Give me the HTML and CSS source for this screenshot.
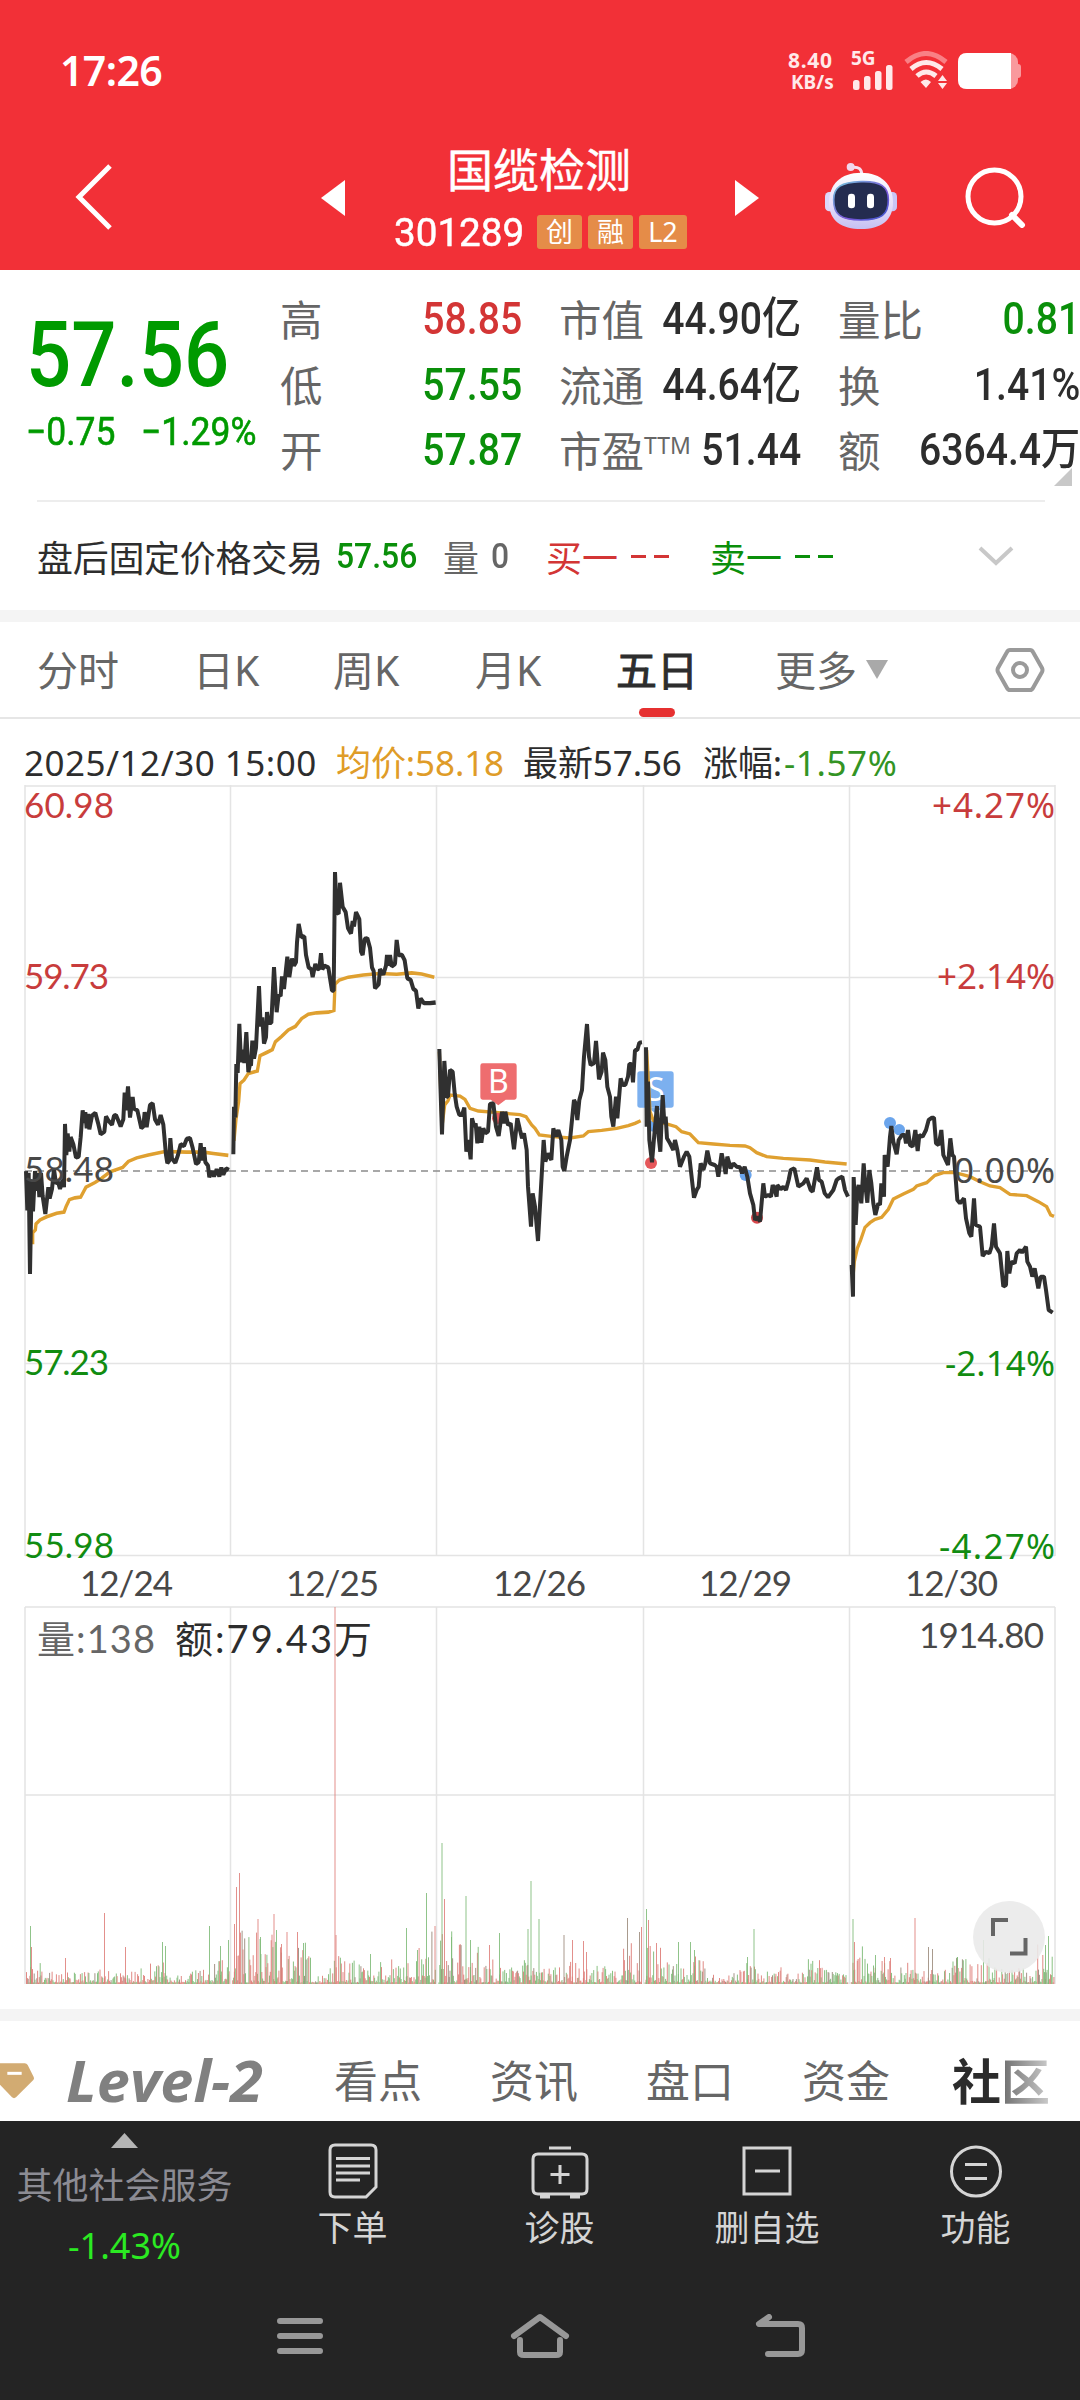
FILE: index.html
```
<!DOCTYPE html>
<html lang="zh-CN">
<head>
<meta charset="utf-8">
<title>国缆检测 301289</title>
<link rel="stylesheet" href="styles.css">
</head>
<body>
<main class="app">
  <header class="top">
    <div class="status">
      <span class="clock">17:26</span>
      <div class="speed"><b>8.40</b><b class="unit">KB/s</b></div>
      <div class="signal"><b>5G</b>
        <svg width="40" height="26" viewBox="0 0 40 26" fill="#ffe9ea"><rect x="0" y="15" width="6.5" height="10" rx="2.5"/><rect x="11" y="11" width="6.5" height="14" rx="2.5"/><rect x="22" y="6" width="6.5" height="19" rx="2.5"/><rect x="33" y="0" width="6.5" height="25" rx="2.5"/></svg>
      </div>
      <svg class="wifi" width="46" height="40" viewBox="0 0 46 40" fill="none" stroke="#ffe9ea" stroke-width="5"><path d="M2 11Q22-6 42 11" stroke="#f98085"/><path d="M7 18Q22 5 38 18"/><path d="M13 25Q22 17 32 25"/><path d="M16.500 31Q22 26 27 31L22 37ZM34 30L38.500 24L43 30ZM34 32L38.500 38L43 32Z" fill="#ffe9ea" stroke="none"/></svg>
      <svg width="64" height="38" viewBox="0 0 64 38"><rect y="1" width="60" height="36" rx="9" fill="#f9999d"/><rect x="56" y="12" width="7" height="14" rx="3" fill="#f9999d"/><path d="M9 1H53V37H9Q0 37 0 28V10Q0 1 9 1Z" fill="#fff"/></svg>
    </div>
    <div class="nav">
      <svg class="back" width="40" height="70" viewBox="0 0 40 70" fill="none" stroke="#fff" stroke-width="5"><path d="M36 4L5 35L36 66"/></svg>
      <svg class="prev" width="24" height="36" viewBox="0 0 24 36"><path d="M24 0V36L0 18Z" fill="#fff"/></svg>
      <div class="title">
        <h1>国缆检测</h1>
        <div class="code"><span class="num">301289</span><i>创</i><i>融</i><i class="l2">L2</i></div>
      </div>
      <svg class="next" width="24" height="36" viewBox="0 0 24 36"><path d="M0 0V36L24 18Z" fill="#fff"/></svg>
      <svg class="robot" width="72" height="68" viewBox="0 0 216 204">
        <defs>
          <linearGradient id="shell" x1="0" y1="0" x2="0" y2="1"><stop offset="0" stop-color="#fff"/><stop offset=".6" stop-color="#e4dcfa"/><stop offset="1" stop-color="#c5c0f2"/></linearGradient>
          <linearGradient id="rim" x1="0" y1="0" x2="1" y2="1"><stop offset="0" stop-color="#74c8dc"/><stop offset=".6" stop-color="#7a56d8"/><stop offset="1" stop-color="#3a5bd0"/></linearGradient>
        </defs>
        <path d="M80 16Q112 12 110 40" fill="none" stroke="#f6dff0" stroke-width="9"/><circle cx="77" cy="15" r="12" fill="#f1d6ec"/>
        <rect y="90" width="30" height="58" rx="13" fill="#dcd6fa"/><rect x="186" y="90" width="30" height="58" rx="13" fill="#c9c5f6"/>
        <path d="M108 32C170 32 204 68 204 122C204 176 166 201 108 201C50 201 12 176 12 122C12 68 46 32 108 32Z" fill="url(#shell)"/>
        <path d="M108 59C168 57 190 75 190 113C190 158 170 174 108 174C46 174 26 158 26 113C26 75 48 61 108 59Z" fill="#242c50" stroke="url(#rim)" stroke-width="5"/>
        <rect x="69" y="95" width="21" height="44" rx="10" fill="#fff"/><rect x="126" y="95" width="21" height="44" rx="10" fill="#fff"/>
      </svg>
      <svg class="search" width="62" height="62" viewBox="0 0 62 62" fill="none" stroke="#fff" stroke-width="5"><circle cx="30.500" cy="30.500" r="26.500"/><path d="M48 49L58 59" stroke-width="6" stroke-linecap="round"/></svg>
    </div>
  </header>

  <section class="quote">
    <div class="price down">
      <span class="last num">57.56</span>
      <div class="chg"><span class="num">−0.75</span><span class="num">−1.29%</span></div>
    </div>
    <dl class="c1"><dt>高</dt><dd class="up">58.85</dd><dt>低</dt><dd class="down">57.55</dd><dt>开</dt><dd class="down">57.87</dd></dl>
    <dl class="c2"><dt>市值</dt><dd>44.90亿</dd><dt>流通</dt><dd>44.64亿</dd><dt>市盈<sup>TTM</sup></dt><dd>51.44</dd></dl>
    <dl class="c3"><dt>量比</dt><dd class="down">0.81</dd><dt>换</dt><dd>1.41%</dd><dt>额</dt><dd>6364.4万</dd></dl>
    <i class="corner"></i>
  </section>

  <section class="after">
    <span>盘后固定价格交易</span><span class="num down">57.56</span><span class="muted">量</span><span class="num muted">0</span>
    <span class="up">买一</span><span class="up dash"><i></i><i></i></span><span class="down">卖一</span><span class="down dash"><i></i><i></i></span>
    <svg width="36" height="22" viewBox="0 0 36 22" fill="none" stroke="#c8c8c8" stroke-width="4"><path d="M2 3L18 18L34 3"/></svg>
  </section>

  <nav class="periods">
    <a>分时</a><a>日K</a><a>周K</a><a>月K</a><a class="on">五日</a><a>更多</a>
    <svg class="more" width="22" height="19" viewBox="0 0 22 19"><path d="M0 0H22L11 19Z" fill="#a9a9a9"/></svg>
    <svg width="50" height="46" viewBox="0 0 50 46" fill="none" stroke="#9a9a9a" stroke-width="4"><path d="M15 3H35Q37 3 38 5L47 21Q48 23 47 25L38 41Q37 43 35 43H15Q13 43 12 41L3 25Q2 23 3 21L12 5Q13 3 15 3Z"/><circle cx="25" cy="23" r="7"/></svg>
  </nav>

  <div class="info"><span class="date">2025/12/30 15:00</span><span class="avg">均价:58.18</span><span>最新57.56</span><span>涨幅:</span><span class="pct">-1.57%</span></div>

  <svg class="chart" width="1080" height="1204" viewBox="0 780 1080 1204">
    <g class="grid">
      <path d="M25 786H1055M25 977.500H1055M25 1363.500H1055M25 1555.500H1055M25 1607H1055M25 1795H1055"/>
      <path d="M25 785V1556M230.500 785V1556M436.500 785V1556M643.500 785V1556M849.500 785V1556M1055 785V1556M25 1607V1984M230.500 1607V1984M436.500 1607V1984M643.500 1607V1984M849.500 1607V1984M1055 1607V1984"/>
      <path class="zero" d="M25 1171H1055"/>
    </g>
    <g class="average">
      <g transform="translate(0 780) scale(.33333 .35714)">
        <path d="M98 1300L98 1268 106 1260 108 1243 120 1232 140 1223 170 1213 192 1210 198 1195 208 1175 225 1170 242 1168 258 1140 285 1127 305 1115 330 1097 368 1085 385 1068 410 1058 445 1050 495 1040 560 1042 610 1042 640 1046 685 1051"/>
        <path d="M702 1010L708 950 716 900 720 850 732 840 745 822 772 815 780 772 800 763 817 755 826 733 845 718 865 700 886 690 905 668 925 656 950 652 985 650 1002 645 1005 572 1018 560 1045 552 1090 546 1140 542 1190 544 1235 540 1265 543 1303 552"/>
      </g>
      <g transform="translate(420 960) scale(.33333)">
        <path d="M58 275L66 500 74 435 84 422 90 405 120 408 135 418 150 445 175 453 235 458 300 464 318 470 335 495 345 505 358 525 400 530 450 534 490 528 505 515 545 511 590 505 625 497 645 490 662 482"/>
      </g>
    </g>
    <g transform="translate(420 960) scale(.33333)">
      <circle cx="233" cy="475" r="17" fill="#e5575a"/>
      <path d="M188 310H283Q290 310 290 317V412Q290 419 283 419H257L235 436L212 419H188Q181 419 181 412V317Q181 310 188 310Z" fill="#ee6d6f"/>
      <rect x="652" y="334" width="109" height="109" rx="8" fill="#7cb0ef"/>
      <path d="M684 443H728L706 460Z" fill="#7cb0ef"/><circle cx="700" cy="498" r="17" fill="#6ba5ec"/>
      <circle cx="693" cy="609" r="18" fill="#e5575a"/><circle cx="977" cy="645" r="18" fill="#6ba5ec"/><circle cx="1011" cy="773" r="18" fill="#d9484c"/>
      <text class="mark" x="235" y="399">B</text><text class="mark" x="707" y="422">S</text>
    </g>
    <g transform="translate(820 1040) scale(.33333)" fill="#6ba5ec"><circle cx="210" cy="249" r="18"/><circle cx="238" cy="269" r="17"/></g>
    <g class="average">
      <g transform="translate(420 960) scale(.33333)"><path d="M680 270L690 455 700 482 745 493 768 500 785 515 810 522 835 548 880 552 930 556 975 558 990 563 1010 578 1040 590 1090 595 1170 600 1215 606 1280 612"/></g>
      <g transform="translate(820 1040) scale(.33333)"><path d="M98 720L103 665 112 625 122 600 135 562 150 548 165 538 185 532 205 508 220 477 250 462 280 448 290 438 320 428 345 406 370 398 400 397 425 403 450 410 480 425 510 438 540 443 570 463 620 467 655 485 680 500 692 525 702 529"/></g>
    </g>
    <g class="trend">
      <g transform="translate(0 780) scale(.33333 .35714)">
        <path d="M78 1095L82 1205 86 1100 90 1383 95 1120 99 1208 105 1095 110 1150 114 1100 118 1168 123 1100 128 1165 136 1215 145 1140 149 1172 156 1145 162 1090 168 1130 174 1125 180 1145 188 1120 192 1140 195 963 199 1050 203 990 208 1040 212 1000 220 1020 228 1057 236 1055 242 1000 248 925 253 960 256 930 260 975 265 935 268 978 276 940 286 932 294 960 302 992 313 985 318 942 326 955 336 965 342 940 348 938 362 970 370 950 374 875 378 925 384 858 390 945 398 888 402 920 412 925 424 975 430 970 434 930 440 972 450 910 458 905 465 950 474 965 482 938 490 965 498 1050 502 1073 508 1065 511 1003 516 1060 526 1072 534 1050 542 1020 552 1025 560 1005 570 1003 578 1030 588 1075 596 1070 602 1017 606 1065 612 1028 616 1070 624 1080 628 1112 636 1095 642 1110 650 1090 658 1110 664 1085 670 1105 678 1088 687 1092"/>
        <path d="M700 1048L702 915 706 945 709 795 713 820 718 683 723 790 727 755 733 792 739 706 745 818 750 795 753 800 757 730 762 780 768 750 777 577 782 690 787 665 792 738 798 720 801 650 806 680 814 680 822 524 830 650 836 600 842 605 846 550 852 585 858 530 862 495 868 552 876 500 882 520 888 510 891 455 896 403 904 440 913 438 918 490 926 525 934 530 938 552 946 515 952 530 958 528 963 485 967 530 973 520 985 525 990 555 996 590 1001 590 1005 258 1010 370 1016 375 1020 288 1028 355 1037 370 1044 415 1053 430 1058 395 1062 410 1068 370 1078 390 1083 480 1088 490 1094 445 1102 443 1110 470 1116 525 1121 535 1125 583 1136 572 1140 530 1150 545 1158 520 1161 490 1166 520 1170 490 1175 522 1185 515 1190 448 1196 490 1206 490 1214 505 1222 555 1232 560 1240 585 1248 590 1255 640 1262 612 1272 625 1290 625 1307 623"/>
      </g>
      <g transform="translate(420 960) scale(.33333)">
        <path d="M58 267L62 400 66 523 70 400 73 303 80 410 84 410 90 330 98 335 104 400 110 440 118 465 126 465 133 443 139 575 145 540 152 598 156 475 163 500 167 490 172 550 178 500 184 548 190 505 196 520 204 515 210 432 220 430 228 500 236 528 246 455 252 490 256 455 264 495 272 490 282 568 292 475 300 510 306 535 312 520 320 570 324 680 333 800 338 700 345 740 354 843 362 700 371 540 376 605 384 580 394 600 400 505 408 530 415 510 424 540 428 620 433 633 440 590 450 540 456 480 462 420 467 430 472 480 478 420 486 390 492 290 501 192 507 290 512 315 522 310 528 243 537 358 545 335 549 278 556 300 562 380 570 410 574 470 580 500 588 410 592 475 602 355 608 375 616 375 624 350 628 312 634 312 639 367 645 270 652 270 658 248 666 247"/>
        <path d="M678 262L680 500 684 365 688 540 696 607 705 500 711 438 716 530 721 575 728 405 733 490 737 470 741 535 750 550 760 570 765 540 772 570 780 620 792 590 800 575 808 590 822 713 830 690 836 680 842 610 850 630 856 610 862 572 870 610 884 615 890 620 895 650 905 580 912 615 917 642 922 590 932 625 940 610 950 620 960 622 966 640 974 620 982 650 990 700 1000 735 1005 780 1012 770 1020 785 1030 670 1035 710 1045 705 1053 710 1058 675 1064 690 1070 710 1072 675 1082 688 1090 680 1098 690 1106 660 1112 630 1123 625 1135 680 1150 670 1160 655 1172 690 1178 695 1191 622 1197 660 1205 665 1214 700 1224 712 1240 690 1250 660 1256 655 1267 650 1275 690 1284 710"/>
      </g>
      <g transform="translate(820 1040) scale(.33333)">
        <path d="M95 675L99 770 101 411 107 555 112 450 116 435 124 490 131 370 136 435 142 488 148 390 154 430 160 490 166 525 175 490 180 495 184 430 192 470 194 345 203 380 210 290 214 258 220 305 230 343 236 300 246 285 254 285 258 310 264 270 270 315 278 320 286 270 293 333 298 285 308 290 318 270 326 240 336 233 342 233 348 310 356 315 364 270 370 345 384 375 391 295 397 345 402 350 412 480 420 490 432 475 438 535 448 580 454 590 462 475 467 555 480 560 488 648 498 635 508 640 515 620 522 550 528 620 540 640 550 740 558 735 562 633 568 700 574 665 584 670 590 640 600 630 606 638 618 620 622 665 630 680 637 710 644 685 655 745 662 710 672 710 678 750 686 810 698 818"/>
      </g>
    </g>
    <g class="axis">
      <text class="r" x="24" y="818" textLength="90">60.98</text><text class="r" x="24" y="989" textLength="85">59.73</text><text x="24" y="1182" textLength="90">58.48</text><text class="g" x="24" y="1375" textLength="85">57.23</text><text class="g" x="24" y="1558" textLength="90">55.98</text>
      <text class="r pc" x="932" y="818" textLength="123">+4.27%</text><text class="r pc" x="937" y="989" textLength="118">+2.14%</text><text class="pc" x="954" y="1183" textLength="101">0.00%</text><text class="g pc" x="945" y="1376" textLength="110">-2.14%</text><text class="g pc" x="939" y="1559" textLength="116">-4.27%</text>
      <text x="80" y="1596" textLength="93">12/24</text><text x="286" y="1596" textLength="93">12/25</text><text x="493" y="1596" textLength="93">12/26</text><text x="699" y="1596" textLength="93">12/29</text><text x="905" y="1596" textLength="93">12/30</text>
      <text x="919" y="1648" textLength="125">1914.80</text>
    </g>
    <g class="vol-label"><text x="37" y="1653" textLength="118" fill="#666">量:138</text><text x="175" y="1653" textLength="197" fill="#2d2d2d">额:79.43万</text></g>
    <g id="volume"></g>
    <circle cx="1009" cy="1937" r="36" fill="#e9e9e9" fill-opacity=".88"/>
    <path d="M993 1936V1920H1008M1010 1953.500H1025.500V1938" fill="none" stroke="#666" stroke-width="4"/>
  </svg>

  <nav class="sections">
    <svg class="gem" width="34" height="38" viewBox="0 0 102 114"><path d="M0 4H74Q80 4 83 9L101 45Q103 50 100 54L48 106Q42 111 36 106L0 68Z" fill="#d2ab72"/><path d="M22 34H65" stroke="#fff" stroke-width="9"/></svg>
    <svg class="level" width="204" height="50"><text x="1" y="46" textLength="197" lengthAdjust="spacingAndGlyphs">Level-2</text></svg>
    <a>看点</a><a>资讯</a><a>盘口</a><a>资金</a><a class="on">社区</a>
  </nav>

  <footer class="dock">
    <div class="tools">
      <div class="index"><svg width="27" height="15" viewBox="0 0 27 15"><path d="M13.500 0L27 15H0Z" fill="#b5b5b5"/></svg><span>其他社会服务</span><span class="pct">-1.43%</span></div>
      <a><svg width="60" height="60" viewBox="0 0 60 60"><path d="M12 4H48Q53 4 53 9V46L43 56H12Q7 56 7 51V9Q7 4 12 4Z"/><path d="M13 17.500H47M13 25H47M13 32H47M13 39H37"/></svg>下单</a>
      <a><svg width="60" height="60" viewBox="0 0 60 60"><path d="M8 13H52Q57 13 57 18V48Q57 53 52 53H8Q3 53 3 48V18Q3 13 8 13ZM19 7H41M10 56H20M40 56H50M30 24V43M20.500 33.500H39.500"/></svg>诊股</a>
      <a><svg width="60" height="60" viewBox="0 0 60 60"><path d="M7 7H53V53H7ZM18 30H43"/></svg>删自选</a>
      <a><svg width="60" height="60" viewBox="0 0 60 60"><circle cx="30" cy="30.500" r="24.500"/><path d="M19 23.500H41M19 37.500H41"/></svg>功能</a>
    </div>
    <div class="keys">
      <svg width="46" height="38" viewBox="0 0 46 38"><path d="M3 4H43M3 19H43M3 34H43"/></svg>
      <svg width="60" height="46" viewBox="0 0 60 46"><path d="M4 23L30 4L56 23M10 27V39Q10 42 14 42H46Q50 42 50 39V27"/></svg>
      <svg width="50" height="44" viewBox="0 0 50 44"><path d="M14 3L4 10H43Q47 10 47 14V36Q47 40 43 40H13"/></svg>
    </div>
  </footer>
</main>
<script src="app.js"></script>
</body>
</html>
```
FILE: styles.css
```
* { box-sizing: border-box; }
body { margin: 0; background: #fff; color: #2d2d2d; font-family: "Noto Sans", "Noto Sans CJK SC", sans-serif; }
.app { width: 1080px; height: 2400px; overflow: hidden; display: flex; flex-direction: column; }
svg { display: block; flex: none; }
i { font-style: normal; }
h1, dl, dd { margin: 0; font-weight: 400; }
.up { color: #d33535; }
.down { color: #0a8f0a; }
.num, dd { font-family: Roboto, "Noto Sans CJK SC", sans-serif; font-weight: 500; }

.top { height: 270px; background: #f23037; color: #fff; flex: none; }
.status { height: 142px; padding-left: 60px; display: grid; grid-template-columns: 728px 63px 53px 54px 64px; align-items: center; }
.clock { font-size: 41px; font-weight: 600; letter-spacing: -.6px; padding-bottom: 2px; }
.speed, .signal { font-size: 21px; line-height: 22px; color: #ffe9ea; display: flex; flex-direction: column; letter-spacing: .7px; }
.speed .unit { padding-left: 3px; font-size: 19px; letter-spacing: 0; }
.signal b { font-size: 19px; line-height: 13px; letter-spacing: 0; }
.signal svg { margin-left: 2px; }
.nav { height: 128px; display: grid; grid-template-columns: 74px 247px 73px 341px 90px 139px 70px; align-items: start; }
.nav > svg { margin-top: 20px; }
.nav .back { grid-column: 2; }
.nav .prev, .nav .next { margin-top: 38px; }
.nav .search { margin-top: 24px; }
.title h1 { font-size: 46px; line-height: 54px; margin: 0 0 2px 53px; white-space: nowrap; -webkit-text-stroke: .5px; }
.code { display: flex; gap: 6px; height: 34px; margin-top: 19px; }
.code .num { width: 137px; font-size: 39px; line-height: 36px; transform: scaleX(.99); transform-origin: left; font-weight: 400; -webkit-text-stroke: .5px; }
.code i { width: 45px; background: #e58c48; border-radius: 3px; font-size: 27px; line-height: 33px; text-align: center; }
.code .l2 { width: 48px; }

.quote { height: 230px; flex: none; position: relative; display: grid; grid-template-columns: 280px 279px 279px 242px; padding-top: 17px; }
.price { padding: 21px 0 0 26px; display: flex; flex-direction: column; white-space: nowrap; color: #009a00; }
.last { font-size: 90px; line-height: 96px; transform: scaleX(.885); transform-origin: left; }
.chg { display: grid; grid-template-columns: 115px 120px; font-size: 39px; line-height: 46px; margin-top: 5px; }
.chg .num { transform: scaleX(.91); transform-origin: left; font-weight: 400; -webkit-text-stroke: .6px; }
.quote dl { display: grid; grid-template-columns: auto auto; grid-auto-rows: 65.500px; line-height: 65px; justify-content: space-between; white-space: nowrap; }
.quote dt { font-size: 42.500px; color: #666; }
.quote dt sup { font-size: 23px; line-height: 0; vertical-align: 13px; }
.quote dd { font-size: 44px; transform: scaleX(.89); transform-origin: right; text-align: right; margin-left: -70px; }
.c1 { padding-right: 37px; }
.c2 { padding-right: 37px; }
.corner { position: absolute; left: 1054px; top: 198px; border: 9px solid; border-color: transparent #c8c8c8 #c8c8c8 transparent; }

.after { height: 110px; flex: none; margin: 0 35px 0 37px; border-top: 2px solid #ededed; display: grid; grid-template-columns: 299px 107px 48px 55px 85px 79px 85px 183px 40px; align-items: center; font-size: 36px; white-space: nowrap; }
.after > span:first-child { letter-spacing: -.3px; }
.after .num { transform: scaleX(.91); transform-origin: left; font-size: 35px; }
.muted, .after .muted { color: #666; }
.dash { display: flex; gap: 8px; }
.dash i { width: 15px; height: 3px; background: currentColor; }

.periods { height: 109px; flex: none; border-top: 12px solid #f4f4f4; border-bottom: 2px solid #e6e6e6; display: grid; grid-template-columns: 37px 156px 140px 142px 141px 159px 91px 129px 50px; align-items: center; font-size: 41px; color: #666; white-space: nowrap; }
.periods a:first-child { grid-column: 2; }
.periods a { line-height: 97px; height: 95px; position: relative; }
.periods .on { color: #2d2d2d; -webkit-text-stroke: 1px; }
.periods .on::after { content: ""; position: absolute; left: 23px; bottom: 0; width: 36px; height: 9px; border-radius: 5px; background: #e63030; }
.info { height: 61px; flex: none; padding-left: 24px; display: grid; grid-template-columns: 312px 187px 180px 81px auto; font-size: 35px; line-height: 88px; white-space: nowrap; letter-spacing: -.1px; }
.info .date { letter-spacing: .5px; }
.info .avg { color: #df9c28; }
.info .pct { color: #339424; letter-spacing: .6px; }

.chart { height: 1204px; }
.grid path { fill: none; stroke: #e4e4e4; stroke-width: 1.500; }
.grid .zero { stroke: #8c8c8c; stroke-dasharray: 7 5; }
.average path { fill: none; stroke: #dfa030; stroke-width: 10; }
.trend path { fill: none; stroke: #303030; stroke-width: 12; stroke-linejoin: bevel; }
.mark { font: 96px "Noto Sans", sans-serif; fill: #fff; text-anchor: middle; }
.axis text { font: 35px Lato, sans-serif; fill: #484848; }
.axis .r { fill: #c83c3c; }
.axis .g { fill: #118c11; }
.axis .pc { font: 35px "Noto Sans", sans-serif; }
.vol-label text { font: 38px Lato, "Noto Sans CJK SC", sans-serif; }

.sections { height: 112px; flex: none; margin-top: 25px; border-top: 12px solid #f4f4f4; display: grid; grid-template-columns: 65px 269px 156px 156px 156px 150px 100px; align-content: center; align-items: center; font-size: 44px; line-height: 56px; color: #666; white-space: nowrap; padding-top: 19px; }
.level text { font: italic 700 58px "Open Sans", sans-serif; fill: #808080; }
.sections .on { font-weight: 700; font-size: 49px; background: linear-gradient(90deg, #2b2b2b 46%, #777 54%, #d0d0d0); -webkit-background-clip: text; background-clip: text; color: transparent; }

.dock { height: 279px; flex: none; background: #242424; color: #d5d5d5; }
.tools { display: grid; grid-template-columns: 249px 207px 207px 208px 209px; height: 158px; }
.tools a { display: flex; flex-direction: column; align-items: center; padding-top: 20px; font-size: 35px; line-height: 54px; }
.tools a svg, .keys svg { fill: none; stroke: #d5d5d5; stroke-width: 3; }
.index { display: flex; flex-direction: column; align-items: center; padding-top: 12px; font-size: 36px; white-space: nowrap; line-height: 52px; }
.index span { color: #8c8c94; margin-top: 12px; }
.index .pct { color: #2bea22; margin-top: 8px; font-size: 36px; }
.keys { height: 112px; display: grid; grid-template-columns: 233px 245px 200px; padding-left: 277px; align-items: center; padding-top: 2px; }
.keys svg { stroke: #989898; stroke-width: 6; stroke-linecap: round; stroke-linejoin: round; }
```
FILE: app.js
```
// Volume bars: five sessions of minute bars plus the outstanding trades.
const layer = document.getElementById('volume');
const BASE = 1984, LEFT = 26, DAY = 206.2;
const GREEN = '#7dba76', RED = '#de7d78', MIXED = '#9a8a7a';
let seed = 20251230;
function rnd() { seed = (seed * 1103515245 + 12345) % 2147483648; return seed / 2147483648; }
function bar(x, h, color, opacity) {
  const r = document.createElementNS('http://www.w3.org/2000/svg', 'rect');
  r.setAttribute('x', x.toFixed(1)); r.setAttribute('y', (BASE - h).toFixed(1));
  r.setAttribute('width', 1); r.setAttribute('height', h.toFixed(1));
  r.setAttribute('fill', color); r.setAttribute('fill-opacity', opacity);
  layer.appendChild(r);
}
const activity = [
  [14, 8, 7, 8, 7, 9, 12, 5, 8, 14],
  [32, 30, 24, 24, 9, 16, 14, 14, 17, 30],
  [32, 25, 15, 11, 22, 10, 14, 10, 10, 24],
  [30, 13, 16, 6, 8, 12, 11, 6, 14, 8],
  [22, 14, 12, 8, 9, 15, 16, 9, 12, 26]
];
for (let d = 0; d < 5; d++) {
  for (let i = 0; i < 238; i++) {
    const level = activity[d][Math.floor(i / 23.8)];
    const h = 1.5 + level * Math.pow(rnd(), 2.6) * 1.7;
    bar(LEFT + d * DAY + i * 0.855, h, rnd() < 0.45 ? RED : rnd() < 0.8 ? GREEN : MIXED, 0.9);
  }
}
const spikes = {
  g: [30,58, 162,42, 165,38, 209,58, 220,38, 228,44, 260,47, 276,54, 303,41, 370,30, 406,56, 417,34, 426,91, 441.5,141, 451,47, 465.5,88, 470,44, 499,51, 527.5,55, 530.5,103, 538.5,65, 646,75, 678,42, 690,42, 694,34, 747,27, 753.5,55, 852.5,65, 875,29, 957,27, 983,44, 1045,39, 1048,48],
  r: [31,37, 65,26, 104,71, 125,37, 234,60, 236,97, 239,111, 257.5,65, 273.5,70, 281,40, 286.5,52, 297,52, 334.5,377, 335.5,49, 434.5,58, 444,85, 489,39, 572,44, 583,43, 586,32, 641,57, 648,64, 656,41, 854,42, 884,27, 890,26, 914.5,66],
  m: [563.5,49, 627,66, 639,52, 928,37, 932,35]
};
for (const [key, list] of Object.entries(spikes)) {
  for (let i = 0; i < list.length; i += 2) {
    bar(list[i], list[i + 1], key === 'g' ? GREEN : key === 'r' ? RED : MIXED, 0.85);
  }
}
```
